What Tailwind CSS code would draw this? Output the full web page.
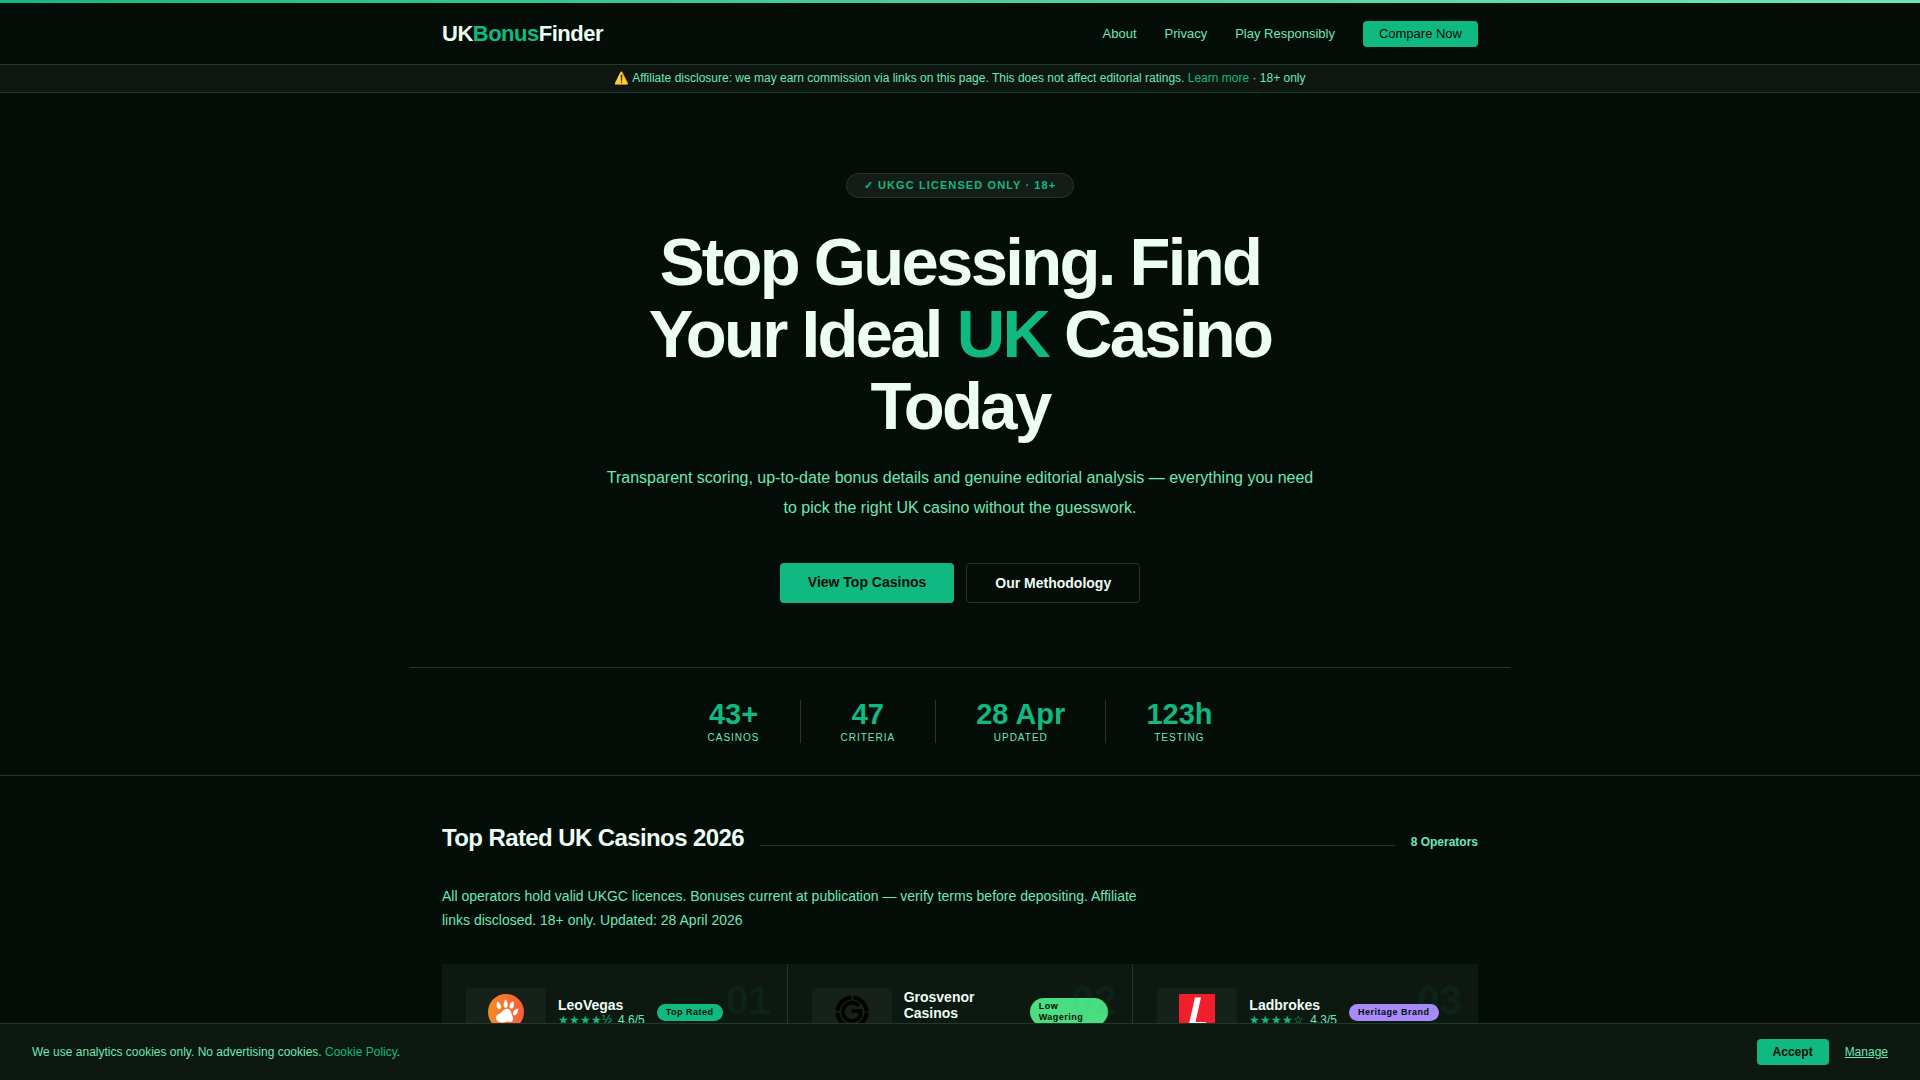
<!DOCTYPE html>
<html lang="en-GB">
<head>
<meta charset="utf-8">
<meta name="viewport" content="width=device-width, initial-scale=1">
<title>UKBonusFinder</title>
<script src="https://cdn.jsdelivr.net/npm/@tailwindcss/browser@4"></script>
</head>
<body class="min-h-screen bg-[#040d08] font-['Liberation_Sans',sans-serif] text-[#ecfdf5]">
<div class="h-[3px] bg-linear-to-r from-[#10b981] to-[#6ee7b7]"></div>

<header class="border-b border-[#1e3a2b]">
  <div class="mx-auto flex h-[61px] max-w-[1100px] items-center justify-between px-8">
    <a href="#" class="text-[22px] font-bold tracking-[-0.5px]">UK<span class="text-[#10b981]">Bonus</span>Finder</a>
    <nav class="flex items-center gap-7 text-[13px] text-[#6ee7b7]">
      <a href="#about">About</a>
      <a href="#privacy">Privacy</a>
      <a href="#responsible">Play Responsibly</a>
      <a href="#top" class="rounded bg-[#10b981] px-4 py-[3px] leading-5 text-[#040d08]">Compare Now</a>
    </nav>
  </div>
</header>

<div class="border-b border-[#1e3a2b] bg-[#0d1611] px-8 py-[5px] text-center text-[12px] leading-[17px] text-[#6ee7b7]">⚠️ Affiliate disclosure: we may earn commission via links on this page. This does not affect editorial ratings. <a href="#learn" class="text-[#10b981]">Learn more</a> · 18+ only</div>

<main>
  <section class="border-b border-[#1e3a2b]">
    <div class="mx-auto flex max-w-[1100px] flex-col items-center border-b border-[#1e3a2b] px-8 pt-20 pb-16 text-center">
      <span class="rounded-full border border-[#1e3a2b] bg-[#141c17] px-[17px] py-[3px] text-[11px] leading-[17px] font-bold tracking-widest text-[#10b981]">✓ UKGC LICENSED ONLY · 18+</span>
      <h1 class="mt-7 max-w-[720px] text-[67px] leading-[72px] font-bold tracking-[-0.04em]">Stop Guessing. Find Your Ideal <span class="text-[#10b981]">UK</span> Casino Today</h1>
      <p class="mt-[21px] max-w-[720px] text-[16px] leading-[30px] text-[#6ee7b7]">Transparent scoring, up-to-date bonus details and genuine editorial analysis — everything you need to pick the right UK casino without the guesswork.</p>
      <div class="mt-10 flex gap-3 text-[14px] leading-4 font-bold">
        <a href="#top" class="rounded bg-[#10b981] px-7 pt-[11px] pb-[13px] text-[#040d08]">View Top Casinos</a>
        <a href="#method" class="rounded border border-[#1e3a2b] px-7 py-[11px]">Our Methodology</a>
      </div>
    </div>
    <dl class="mx-auto flex max-w-[1100px] justify-center px-8 py-8 text-center">
      <div class="flex flex-col-reverse gap-1 border-r border-[#1e3a2b] px-10"><dt class="text-[10px] leading-[11px] tracking-widest text-[#6ee7b7]">CASINOS</dt><dd class="text-[29px] leading-7 font-bold text-[#10b981]">43+</dd></div>
      <div class="flex flex-col-reverse gap-1 border-r border-[#1e3a2b] px-10"><dt class="text-[10px] leading-[11px] tracking-widest text-[#6ee7b7]">CRITERIA</dt><dd class="text-[29px] leading-7 font-bold text-[#10b981]">47</dd></div>
      <div class="flex flex-col-reverse gap-1 border-r border-[#1e3a2b] px-10"><dt class="text-[10px] leading-[11px] tracking-widest text-[#6ee7b7]">UPDATED</dt><dd class="text-[29px] leading-7 font-bold text-[#10b981]">28 Apr</dd></div>
      <div class="flex flex-col-reverse gap-1 px-10"><dt class="text-[10px] leading-[11px] tracking-widest text-[#6ee7b7]">TESTING</dt><dd class="text-[29px] leading-7 font-bold text-[#10b981]">123h</dd></div>
    </dl>
  </section>

  <section id="top" class="mx-auto max-w-[1100px] px-8 pt-12">
    <div class="flex items-baseline gap-4">
      <h2 class="text-[24px] leading-7 font-bold tracking-tight">Top Rated UK Casinos 2026</h2>
      <span class="h-px flex-1 bg-[#1e3a2b]"></span>
      <span class="text-[12px] font-bold text-[#6ee7b7]">8 Operators</span>
    </div>
    <p class="mt-8 max-w-[700px] text-[14px] leading-6 text-[#6ee7b7]">All operators hold valid UKGC licences. Bonuses current at publication — verify terms before depositing. Affiliate links disclosed. 18+ only. Updated: 28 April 2026</p>

    <div class="mt-8 grid grid-cols-3 gap-px bg-[#1e3a2b]">
      <article class="relative bg-[#0d1811] p-6">
        <div class="flex items-center gap-3">
          <div class="flex h-12 w-20 shrink-0 justify-center rounded bg-[#16211a] pt-[6px]">
            <svg class="size-9" viewBox="0 0 36 36" aria-label="LeoVegas logo"><defs><linearGradient id="leo" x1="0" x2="1" y1="0" y2="0"><stop offset="0" stop-color="#f58a22"/><stop offset="1" stop-color="#ff5a3c"/></linearGradient></defs><circle cx="18" cy="18" r="18" fill="url(#leo)"/><g fill="#fff"><path d="M9.300 7.500c2.500 1.400 4.400 4.200 3.900 6.300-.5 1.800-2.600 2-3.800.3-1.200-1.700-1.100-4.500-.1-6.600z"/><path d="M17.600 5.500c1.600 1.700 2.600 4.500 1.800 6.900-.6 1.700-2.600 1.800-3.400.1-.9-2.200.1-5.200 1.600-7z"/><path d="M25.200 7c1 2 1.100 4.800-.2 6.700-1.100 1.500-3 1.200-3.400-.6-.5-2.300 1.500-4.800 3.600-6.100z"/><path d="M30.200 14.500c.1 2.300-.7 5.300-2.700 6.500-1.500.8-3-.3-2.700-2 .5-2.300 3.100-4 5.400-4.500z"/><path d="M17.500 15c3.200-.9 5.700 1.100 5.800 4 .1 2.200 1.900 3.400 1.900 5.700 0 2.400-1.900 3.600-3.900 3-2.200-.7-3.700.4-6.300.7-3.600.4-7-1.300-6.900-4.700.1-2.300 1.600-3.300 3.700-4.100 2.500-1 2.900-3.800 5.700-4.600z"/></g></svg>
          </div>
          <div>
            <h3 class="text-[14px] leading-4 font-bold">LeoVegas</h3>
            <p class="flex gap-[6px] text-[12px] leading-[15px] whitespace-nowrap text-[#6ee7b7]"><span class="text-[#10b981]">★★★★½</span> 4.6/5</p>
          </div>
          <span class="rounded-full bg-[#10b981] px-[9px] py-[3px] text-[9px] leading-[11px] font-bold tracking-[0.5px] whitespace-nowrap text-[#040d08]">Top Rated</span>
        </div>
        <span class="absolute top-4 right-4 text-[40px] leading-none font-bold text-[#10b981]/8">01</span>
      </article>

      <article class="relative bg-[#0d1811] p-6">
        <div class="flex items-center gap-3">
          <div class="flex h-12 w-20 shrink-0 justify-center rounded bg-[#16211a] pt-[6px]">
            <svg class="size-9" viewBox="0 0 36 36" aria-label="Grosvenor logo" fill="none" stroke="#000"><circle cx="18" cy="18" r="14.600" stroke-width="4" stroke-dasharray="20.930 2" stroke-dashoffset="-1"/><path d="M24.800 11.500A9.200 9.200 0 1 0 26.500 21.500V17H17.500" stroke-width="3.600"/></svg>
          </div>
          <div class="w-[114px]">
            <h3 class="text-[14px] leading-4 font-bold">Grosvenor<br>Casinos</h3>
            <p class="flex gap-[6px] text-[12px] leading-[15px] whitespace-nowrap text-[#6ee7b7]"><span class="text-[#10b981]">★★★★½</span> 4.5/5</p>
          </div>
          <span class="w-[78px] rounded-full bg-[#4ade80] px-[9px] py-[3px] text-[9px] leading-[11px] font-bold tracking-[0.5px] text-[#040d08]">Low Wagering</span>
        </div>
        <span class="absolute top-4 right-4 text-[40px] leading-none font-bold text-[#10b981]/8">02</span>
      </article>

      <article class="relative bg-[#0d1811] p-6">
        <div class="flex items-center gap-3">
          <div class="flex h-12 w-20 shrink-0 justify-center rounded bg-[#16211a] pt-[6px]">
            <svg class="size-9" viewBox="0 0 36 36" aria-label="Ladbrokes logo"><path fill="#f01f2b" d="M0 0h36v36H0z"/><path fill="#fff" d="M16 3.500h6L16.500 28H27l-1 4H9.500z"/></svg>
          </div>
          <div>
            <h3 class="text-[14px] leading-4 font-bold">Ladbrokes</h3>
            <p class="flex gap-[6px] text-[12px] leading-[15px] whitespace-nowrap text-[#6ee7b7]"><span class="text-[#10b981]">★★★★☆</span> 4.3/5</p>
          </div>
          <span class="rounded-full bg-[#a78bfa] px-[9px] py-[3px] text-[9px] leading-[11px] font-bold tracking-[0.5px] whitespace-nowrap text-[#040d08]">Heritage Brand</span>
        </div>
        <span class="absolute top-4 right-4 text-[40px] leading-none font-bold text-[#10b981]/8">03</span>
      </article>
    </div>
  </section>
</main>

<div class="fixed inset-x-0 bottom-0 flex items-center justify-between border-t border-[#1e3a2b] bg-[#0d1811] px-8 py-[15px] text-[12px] text-[#6ee7b7]">
  <p>We use analytics cookies only. No advertising cookies. <a href="#cookies" class="text-[#10b981]">Cookie Policy</a>.</p>
  <div class="flex items-center gap-4">
    <button type="button" class="rounded bg-[#10b981] px-4 py-[5px] leading-4 font-bold text-[#040d08]">Accept</button>
    <button type="button" class="underline">Manage</button>
  </div>
</div>
</body>
</html>
